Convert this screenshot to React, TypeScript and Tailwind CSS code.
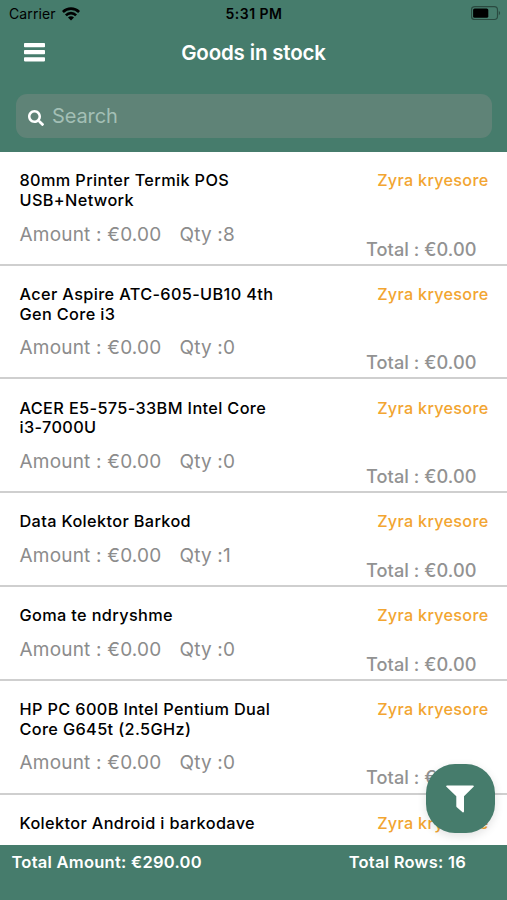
import { FaSearch } from "react-icons/fa"

type Item = { name: string[]; qty?: number }

const items: Item[] = [
  { name: ["80mm Printer Termik POS", "USB+Network"], qty: 8 },
  { name: ["Acer Aspire ATC-605-UB10 4th", "Gen Core i3"], qty: 0 },
  { name: ["ACER E5-575-33BM Intel Core", "i3-7000U"], qty: 0 },
  { name: ["Data Kolektor Barkod"], qty: 1 },
  { name: ["Goma te ndryshme"], qty: 0 },
  { name: ["HP PC 600B Intel Pentium Dual", "Core G645t (2.5GHz)"], qty: 0 },
  { name: ["Kolektor Android i barkodave"] },
]

function WifiIcon() {
  return (
    <svg width="18" height="14" viewBox="0 0 18 14" fill="none" stroke="#000" strokeWidth="2.6">
      <path d="M0.9 5a11.4 11.4 0 0 1 16.2 0" />
      <path d="M3.9 8.3a7.1 7.1 0 0 1 10.2 0" />
      <path d="M9 13.6 6 10.5a4.2 4.2 0 0 1 6 0Z" fill="#000" stroke="none" />
    </svg>
  )
}

function BatteryIcon() {
  return (
    <svg width="31" height="15" viewBox="0 0 31 15" fill="none">
      <rect x="0.5" y="0.7" width="26" height="12.8" rx="3.2" stroke="#000" strokeOpacity="0.4" strokeWidth="1.2" />
      <rect x="2.1" y="2.4" width="15.2" height="9.4" rx="1.6" fill="#000" />
      <path d="M27.8 5c1.8.6 1.8 3.6 0 4.2Z" fill="#000" fillOpacity="0.4" />
    </svg>
  )
}

function MenuIcon() {
  return (
    <svg width="21" height="19" viewBox="0 0 21 19" fill="currentColor">
      <rect width="21" height="4.2" rx="0.8" />
      <rect y="7.1" width="21" height="4.2" rx="0.8" />
      <rect y="14.2" width="21" height="4.2" rx="0.8" />
    </svg>
  )
}

function FilterIcon() {
  return (
    <svg width="28" height="28" viewBox="0 0 28 28" fill="currentColor">
      <path d="M1 0.4h26a0.8 0.8 0 0 1 .6 1.4L18 11.2v15.4c0 .8-.8 1.1-1.4.6l-5.8-4.9a1.5 1.5 0 0 1-.5-1.1V11.2L.4 1.8A0.8 0.8 0 0 1 1 .4Z" />
    </svg>
  )
}

function StatusBar() {
  return (
    <div className="grid h-[27px] grid-cols-3 items-center pl-[9px] pr-[5px] text-[14px] text-black">
      <div className="flex items-center gap-[6px]">
        <span className="tracking-[0.1px]">Carrier</span>
        <WifiIcon />
      </div>
      <span className="-ml-[3px] text-center font-semibold tracking-[0.5px]">5:31 PM</span>
      <div className="flex justify-end">
        <BatteryIcon />
      </div>
    </div>
  )
}

function Row({ name, qty }: Item) {
  return (
    <li className="flex justify-between border-b-2 border-[#cfcfcf] pl-[19.5px] pr-[18.5px] pt-[19.1px] last:border-b-0">
      <div>
        <h2 className="text-[16.3px] font-medium leading-[19.6px] tracking-[0.36px] text-black">
          {name.map(line => (
            <span key={line} className="block whitespace-nowrap">{line}</span>
          ))}
        </h2>
        {qty !== undefined && (
          <p className="mt-[12px] mb-[18.3px] flex gap-[18px] whitespace-nowrap text-[19px] leading-[23px] tracking-[0.2px] text-[#8c8c8c]">
            <span>Amount : €0.00</span>
            <span>Qty :{qty}</span>
          </p>
        )}
      </div>
      <div className="flex flex-col items-end justify-between whitespace-nowrap">
        <span className="text-[16.2px] font-medium leading-[19.6px] tracking-[0.3px] text-[#f2a531]">Zyra kryesore</span>
        {qty !== undefined && (
          <span className="mb-[3.1px] mr-3 text-[18.2px] font-medium leading-[23px] tracking-[0.05px] text-[#929292]">Total : €0.00</span>
        )}
      </div>
    </li>
  )
}

export default function App() {
  return (
    <div className="relative flex h-[900px] w-[507px] flex-col overflow-hidden bg-white font-['Inter',sans-serif]">
      <header className="h-[152.3px] shrink-0 bg-[#467c6c]">
        <StatusBar />
        <div className="grid h-[51px] grid-cols-[48px_1fr_48px] items-center">
          <button className="flex justify-end pr-[3px] text-white" aria-label="Menu">
            <MenuIcon />
          </button>
          <h1 className="pt-px text-center text-[20.5px] font-semibold tracking-[-0.17px] text-white">Goods in stock</h1>
        </div>
        <div className="ml-4 mr-[15px] mt-4 flex h-11 items-center gap-[8px] rounded-[11px] bg-[#5f8377] pl-[12px]">
          <FaSearch size={16} className="mt-[3px] text-white" />
          <span className="text-[20px] tracking-[-0.1px] text-[#a3bfb5]">Search</span>
        </div>
      </header>

      <ul className="min-h-0 flex-1 overflow-hidden">
        {items.map(item => (
          <Row key={item.name[0]} {...item} />
        ))}
      </ul>

      <footer className="flex h-[55px] shrink-0 justify-between bg-[#467c6c] pl-[11.5px] pr-[41px] pt-[7px] text-[16.5px] font-semibold leading-5 tracking-[0.26px] text-white">
        <span>Total Amount: €290.00</span>
        <span>Total Rows: 16</span>
      </footer>

      <button
        className="absolute bottom-[67px] right-[12px] flex size-[69px] items-center justify-center rounded-[29px] bg-[#467c6c] pr-px text-white shadow-[0_3px_10px_rgba(0,0,0,0.12)]"
        aria-label="Filter"
      >
        <FilterIcon />
      </button>
    </div>
  )
}
